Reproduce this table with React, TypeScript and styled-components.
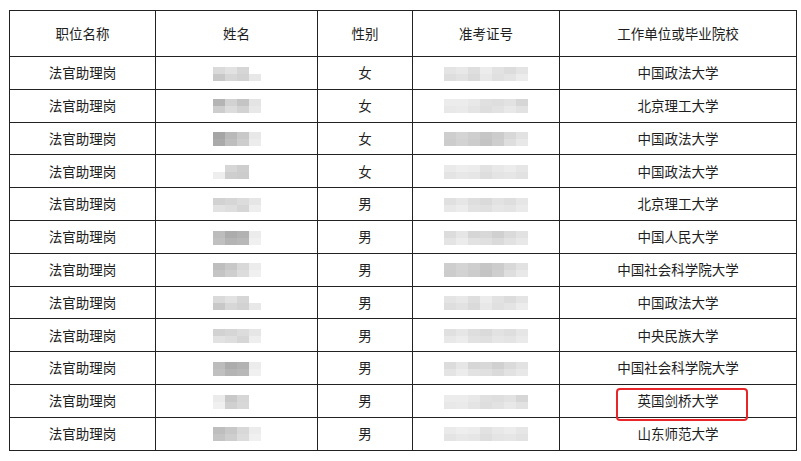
import React from 'react'
import styled, { createGlobalStyle } from 'styled-components'

interface Row {
  gender: string
  school: string
  name: number[][]
  id: number[][]
  marked?: boolean
}

// grey shades for the pixelated (blurred) cells, 0 = white
const n1 = [[218, 226, 214, 0], [200, 215, 210, 232]]
const n2 = [[180, 210, 196, 228], [205, 220, 210, 232]]
const n3 = [[165, 185, 200, 232], [170, 190, 205, 236]]
const n4 = [[0, 214, 206, 0], [238, 206, 204, 0]]
const n5 = [[210, 214, 220, 230], [226, 222, 214, 238]]
const n6 = [[188, 172, 178, 236], [192, 180, 184, 240]]
const n7 = [[190, 200, 216, 236], [196, 206, 220, 240]]
const n8 = [[235, 200, 214, 0], [240, 208, 216, 0]]

const i1 = [[228, 232, 222, 236, 226, 220, 228], [222, 226, 218, 232, 224, 228, 236]]
const i2 = [[236, 236, 232, 224, 222, 226, 214], [232, 234, 228, 222, 226, 232, 226]]
const i3 = [[206, 212, 206, 198, 204, 216, 226], [204, 210, 204, 196, 206, 222, 232]]
const i4 = [[234, 238, 236, 226, 232, 236, 230], [228, 232, 230, 222, 228, 230, 226]]
const i5 = [[224, 230, 222, 218, 226, 222, 230], [232, 236, 226, 224, 230, 228, 234]]
const i6 = [[220, 230, 214, 216, 208, 218, 226], [228, 236, 226, 224, 218, 226, 232]]

const rows: Row[] = [
  { gender: '女', school: '中国政法大学', name: n1, id: i1 },
  { gender: '女', school: '北京理工大学', name: n2, id: i2 },
  { gender: '女', school: '中国政法大学', name: n3, id: i3 },
  { gender: '女', school: '中国政法大学', name: n4, id: i4 },
  { gender: '男', school: '北京理工大学', name: n5, id: i5 },
  { gender: '男', school: '中国人民大学', name: n6, id: i6 },
  { gender: '男', school: '中国社会科学院大学', name: n7, id: i3 },
  { gender: '男', school: '中国政法大学', name: n1, id: i1 },
  { gender: '男', school: '中央民族大学', name: n5, id: i5 },
  { gender: '男', school: '中国社会科学院大学', name: n6, id: i6 },
  { gender: '男', school: '英国剑桥大学', name: n8, id: i2, marked: true },
  { gender: '男', school: '山东师范大学', name: n7, id: i4 },
]

const Mosaic: React.FC<{ cells: number[][] }> = ({ cells }) => (
  <MosaicGrid cols={cells[0].length}>
    {cells.flat().map((g, i) => (
      <MosaicCell key={i} shade={g} />
    ))}
  </MosaicGrid>
)

export default function App() {
  return (
    <>
      <GlobalStyle />
      <Page>
        <Table>
          <colgroup>
            <col style={{ width: 146 }} />
            <col style={{ width: 162 }} />
            <col style={{ width: 95 }} />
            <col style={{ width: 147 }} />
            <col style={{ width: 237 }} />
          </colgroup>
          <thead>
            <HeadRow>
              <Cell as="th">职位名称</Cell>
              <Cell as="th">姓名</Cell>
              <Cell as="th">性别</Cell>
              <Cell as="th">准考证号</Cell>
              <Cell as="th">工作单位或毕业院校</Cell>
            </HeadRow>
          </thead>
          <tbody>
            {rows.map((r, i) => (
              <BodyRow key={i}>
                <Cell>法官助理岗</Cell>
                <Cell>
                  <Mosaic cells={r.name} />
                </Cell>
                <Cell>{r.gender}</Cell>
                <Cell>
                  <Mosaic cells={r.id} />
                </Cell>
                <SchoolCell>
                  {r.school}
                  {r.marked && <Highlight />}
                </SchoolCell>
              </BodyRow>
            ))}
          </tbody>
        </Table>
      </Page>
    </>
  )
}

//#region Styled components
const GlobalStyle = createGlobalStyle`
  body {
    margin: 0;
    background: #fff;
    font-family: "Noto Sans CJK SC", "Noto Sans", sans-serif;
  }
`

const Page = styled.div`
  padding: 10px 0 0 9px;
`

const Table = styled.table`
  border-collapse: collapse;
  table-layout: fixed;
  width: 788px;
  color: #1e1e1e;
  font-size: 13.5px;
`

const HeadRow = styled.tr`
  height: 46px;
`

const BodyRow = styled.tr`
  height: 32.8px;
`

const Cell = styled.td`
  border: 1px solid #222;
  padding: 0;
  text-align: center;
  vertical-align: middle;
  font-weight: normal;
  line-height: 1;
`

const SchoolCell = styled(Cell)`
  position: relative;
`

const Highlight = styled.span`
  position: absolute;
  left: 56px;
  top: 3px;
  width: 128px;
  height: 29px;
  border: 2px solid #e8262a;
  border-radius: 4px;
`

const MosaicGrid = styled.div<{ cols: number }>`
  display: inline-grid;
  grid-template-columns: repeat(${p => p.cols}, 12px);
  grid-auto-rows: 7px;
  vertical-align: middle;
`

const MosaicCell = styled.span<{ shade: number }>`
  background: ${p => (p.shade ? `rgb(${p.shade}, ${p.shade}, ${p.shade})` : 'transparent')};
`
//#endregion
